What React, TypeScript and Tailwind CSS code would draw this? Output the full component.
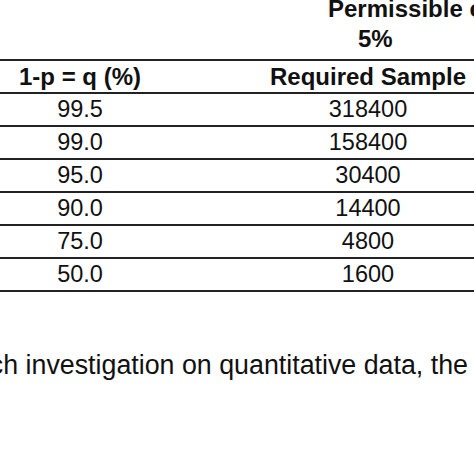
import React from 'react';

const rows = [
  { q: '99.5', n: '318400' },
  { q: '99.0', n: '158400' },
  { q: '95.0', n: '30400' },
  { q: '90.0', n: '14400' },
  { q: '75.0', n: '4800' },
  { q: '50.0', n: '1600' },
];

function Row({ left, right, bold }: { left: string; right: string; bold?: boolean }) {
  return (
    <div
      className={`flex h-[33px] border-t-2 border-[#222] items-center ${
        bold ? 'font-bold text-[24px]' : 'text-[23.5px]'
      }`}
    >
      <div className="w-[160px] shrink-0 text-center">{left}</div>
      <div className="w-[416px] shrink-0 text-center">{right}</div>
    </div>
  );
}

export default function App() {
  return (
    <div
      className="w-[474px] h-[474px] overflow-hidden bg-white text-[#111]"
      style={{ fontFamily: '"Liberation Sans", Arial, sans-serif' }}
    >
      <div className="w-[640px]">
        {/* merged header, top part cut off */}
        <div className="h-[59px] flex">
          <div className="w-[160px] shrink-0" />
          <div className="w-[480px] shrink-0 font-bold text-[24px] leading-[30px] -mt-[6px] whitespace-nowrap">
            <div className="pl-[168px]">Permissible error</div>
            <div className="pl-[198px]">5%</div>
          </div>
        </div>

        <Row left="1-p = q (%)" right="Required Sample" bold />
        {rows.map((r) => (
          <Row key={r.q} left={r.q} right={r.n} />
        ))}
        <div className="border-t-2 border-[#222]" />
      </div>

      <p className="mt-[58px] -ml-[40px] text-[26.8px] leading-[30px] whitespace-nowrap">
        each investigation on quantitative data, the
      </p>
    </div>
  );
}
